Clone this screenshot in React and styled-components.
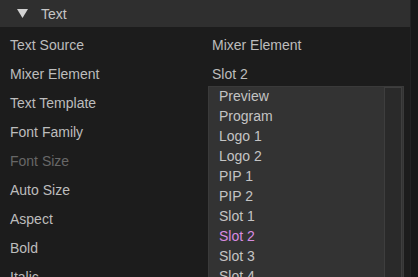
import React from "react";
import styled, { createGlobalStyle } from "styled-components";

const Global = createGlobalStyle`
  html, body { margin: 0; padding: 0; background: #1c1c1c; overflow: hidden; }
  body { font-family: "Liberation Sans", Arial, sans-serif; }
`;

const Page = styled.div`
  width: 418px;
  height: 277px;
  display: flex;
  overflow: hidden;
  background: #1c1c1c;
`;

const Main = styled.div`
  flex: 1;
  display: flex;
  flex-direction: column;
  position: relative;
`;

const RightStrip = styled.div`
  width: 7px;
  background: #181818;
  border-left: 1px solid #232323;
`;

const Header = styled.div`
  height: 27px;
  background: #2f2f2f;
  display: flex;
  align-items: center;
  padding-left: 17px;
  gap: 13px;
  color: #c6c6c6;
  font-size: 14px;
  flex-shrink: 0;
`;

const Arrow = styled.svg`
  width: 11px;
  height: 9px;
  display: block;
`;

const Rows = styled.div`
  display: flex;
  flex-direction: column;
  padding-top: 3px;
`;

const Row = styled.div`
  height: 29px;
  display: grid;
  grid-template-columns: 202px 1fr;
  align-items: center;
  padding-left: 10px;
  font-size: 14px;
  color: ${(p) => (p.$disabled ? "#676767" : "#bdbdbd")};
`;

const Dropdown = styled.div`
  position: absolute;
  left: 208px;
  top: 86px;
  width: 196px;
  height: 200px;
  background: #333333;
  border: 1px solid #3a3a3a;
  border-bottom: none;
  box-sizing: border-box;
  display: flex;
`;

const List = styled.div`
  flex: 1;
  display: flex;
  flex-direction: column;
  margin-top: -1px;
`;

const Item = styled.div`
  height: 20px;
  line-height: 20px;
  padding-left: 10px;
  font-size: 14px;
  color: ${(p) => (p.$selected ? "#d88ce2" : "#c4c4c4")};
`;

const Scroll = styled.div`
  width: 18px;
  margin-right: 1px;
  background: #2a2a2a;
  border: 1px solid #3e3e3e;
  border-bottom: none;
  box-sizing: border-box;
`;

const rows = [
  ["Text Source", "Mixer Element"],
  ["Mixer Element", "Slot 2"],
  ["Text Template", ""],
  ["Font Family", ""],
  ["Font Size", "", true],
  ["Auto Size", ""],
  ["Aspect", ""],
  ["Bold", ""],
  ["Italic", ""],
];

const items = [
  "Preview",
  "Program",
  "Logo 1",
  "Logo 2",
  "PIP 1",
  "PIP 2",
  "Slot 1",
  "Slot 2",
  "Slot 3",
  "Slot 4",
];

export default function App() {
  return (
    <Page>
      <Global />
      <Main>
        <Header>
          <Arrow viewBox="0 0 11 9">
            <polygon points="0,0 11,0 5.5,9" fill="#d2d2d2" />
          </Arrow>
          <span>Text</span>
        </Header>
        <Rows>
          {rows.map(([l, v, d]) => (
            <Row key={l} $disabled={d}>
              <span>{l}</span>
              <span>{v}</span>
            </Row>
          ))}
        </Rows>
        <Dropdown>
          <List>
            {items.map((it) => (
              <Item key={it} $selected={it === "Slot 2"}>
                {it}
              </Item>
            ))}
          </List>
          <Scroll />
        </Dropdown>
      </Main>
      <RightStrip />
    </Page>
  );
}
